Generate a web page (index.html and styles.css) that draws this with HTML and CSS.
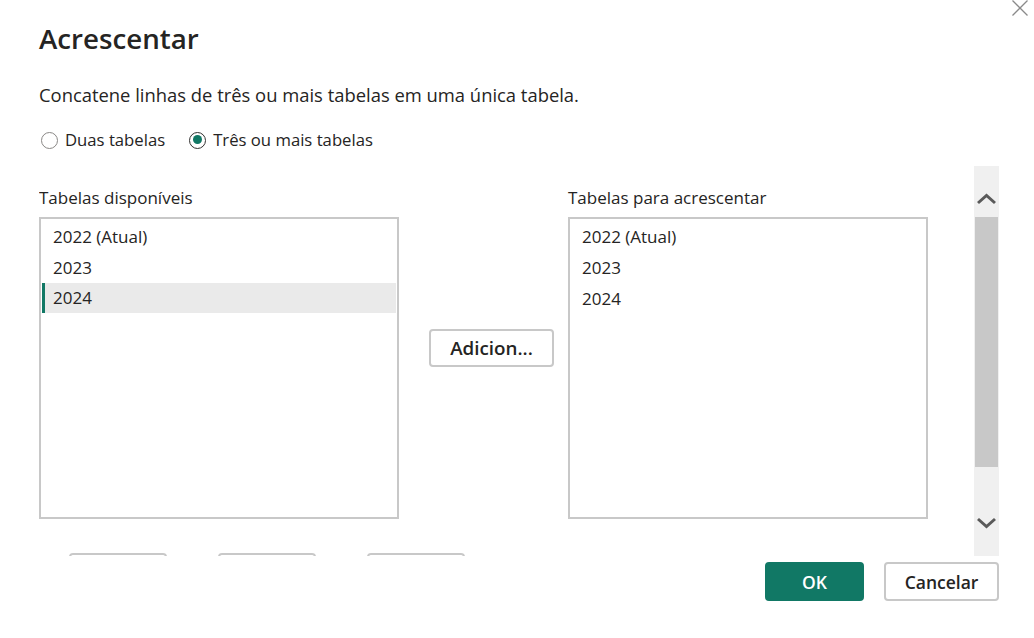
FILE: index.html
```html
<!DOCTYPE html>
<html lang="pt">
<head>
  <meta charset="UTF-8" />
  <meta name="viewport" content="width=device-width, initial-scale=1.0" />
  <title>Acrescentar</title>
  <link rel="stylesheet" href="styles.css">
</head>
<body>
  <div class="dialog">
    <button class="close" title="Fechar">
      <svg width="16" height="16" viewBox="0 0 16 16">
        <path d="M0.5 0.5 L15.5 15.5 M15.5 0.5 L0.5 15.5" stroke="#8a8a8a" stroke-width="1.3" fill="none" />
      </svg>
    </button>

    <h1 class="title">Acrescentar</h1>
    <p class="desc">Concatene linhas de três ou mais tabelas em uma única tabela.</p>

    <div class="radios">
      <label class="radio"><span class="circle"></span>Duas tabelas</label>
      <label class="radio checked"><span class="circle"></span>Três ou mais tabelas</label>
    </div>

    <div class="scroll-area">
      <div class="scroll-content">
        <div class="columns">
          <div class="column">
            <div class="col-label">Tabelas disponíveis</div>
            <ul class="list">
              <li>2022 (Atual)</li>
              <li>2023</li>
              <li class="selected">2024</li>
            </ul>
          </div>
          <div class="middle">
            <button class="btn add">Adicion...</button>
          </div>
          <div class="column">
            <div class="col-label">Tabelas para acrescentar</div>
            <ul class="list">
              <li>2022 (Atual)</li>
              <li>2023</li>
              <li>2024</li>
            </ul>
          </div>
        </div>
        <div class="list-actions">
          <button class="btn small"></button>
          <button class="btn small"></button>
          <button class="btn small"></button>
        </div>
      </div>

      <div class="scrollbar">
        <svg class="arrow up" width="25" height="12" viewBox="0 0 25 12">
          <path d="M4 10 L12.5 2.5 L21 10" stroke="#5a5a5a" stroke-width="3" fill="none" />
        </svg>
        <div class="thumb"></div>
        <svg class="arrow down" width="25" height="12" viewBox="0 0 25 12">
          <path d="M4 2 L12.5 9.5 L21 2" stroke="#5a5a5a" stroke-width="3" fill="none" />
        </svg>
      </div>
    </div>

    <div class="footer">
      <button class="btn primary">OK</button>
      <button class="btn cancel">Cancelar</button>
    </div>
  </div>
</body>
</html>
```

FILE: styles.css
```css
* {
  margin: 0;
  padding: 0;
  box-sizing: border-box;
}

body {
  width: 1034px;
  height: 638px;
  background: #fff;
  color: #252423;
  font-family: 'Open Sans', 'Noto Sans', sans-serif;
  font-size: 17px;
  overflow: hidden;
}

.dialog {
  position: relative;
  padding: 0 35px 0 39px;
}

.close {
  position: absolute;
  top: 0;
  right: 6px;
  width: 16px;
  height: 16px;
  border: none;
  background: none;
}

.close svg {
  display: block;
}

.title {
  padding-top: 19px;
  font-size: 27.7px;
  line-height: 38px;
  font-weight: 600;
}

/* описание крупнее остального текста */
.desc {
  margin-top: 26px;
  font-size: 18.4px;
  line-height: 24px;
}

.radios {
  display: flex;
  margin-top: 21px;
  gap: 22px;
  font-size: 16.7px;
  line-height: 24px;
}

.radio {
  display: flex;
  align-items: center;
  gap: 7px;
}

.circle {
  width: 17px;
  height: 17px;
  margin-left: 2px;
  border: 1px solid #8a8886;
  border-radius: 50%;
  position: relative;
}

.radio.checked .circle {
  border: 1.5px solid #323130;
}

.radio.checked .circle::after {
  content: "";
  position: absolute;
  top: 2.5px;
  left: 2.5px;
  width: 9px;
  height: 9px;
  border-radius: 50%;
  background: #117865;
}

.scroll-area {
  display: flex;
  height: 390px;
  margin-top: 14px;
  overflow: hidden;
}

.scroll-content {
  flex: 1;
  padding-top: 20px;
}

.columns {
  display: flex;
}

.column {
  width: 360px;
}

.col-label {
  line-height: 24px;
  margin-bottom: 7px;
}

.list {
  list-style: none;
  height: 302px;
  border: 2px solid #c8c8c8;
  padding: 2px 1px 1px 1px;
}

.list li {
  height: 31px;
  line-height: 31px;
  padding-left: 11px;
}

.list li.selected {
  background: #eaeaea;
  border-left: 3px solid #117865;
  padding-left: 8px;
  height: 30px;
  line-height: 30px;
}

.middle {
  width: 169px;
  padding: 143px 0 0 30px;
}

.btn {
  font-family: inherit;
  font-size: 17.5px;
  font-weight: 600;
  color: #252423;
  background: #fff;
  border: 2px solid #c8c8c8;
  border-radius: 4px;
  height: 39px;
  cursor: pointer;
}

.btn.add {
  width: 125px;
  height: 38px;
  font-size: 18.8px;
}

.list-actions {
  display: flex;
  gap: 51px;
  margin-top: 34px;
  padding-left: 30px;
}

.btn.small {
  width: 98px;
  height: 38px;
}

.scrollbar {
  width: 25px;
  background: #f0f0f0;
  display: flex;
  flex-direction: column;
  align-items: center;
}

.arrow {
  display: block;
}

.arrow.up {
  margin: 27px 0 12px 0;
}

.thumb {
  width: 23px;
  height: 250px;
  background: #c8c8c8;
}

.arrow.down {
  margin-top: 50px;
}

.footer {
  display: flex;
  justify-content: flex-end;
  gap: 20px;
  margin-top: 6px;
}

.btn.primary {
  width: 99px;
  background: #117865;
  border-color: #117865;
  color: #fff;
}

.btn.cancel {
  width: 115px;
}
```
